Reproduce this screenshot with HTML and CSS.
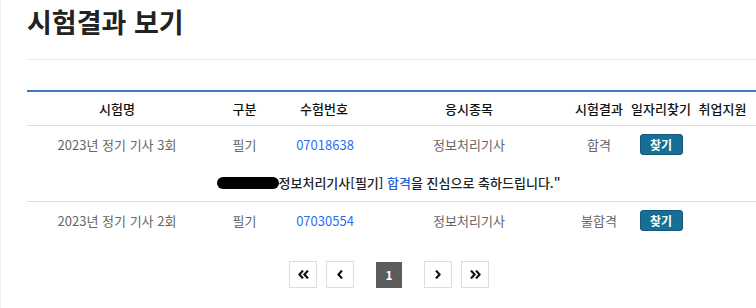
FILE: index.html
```html
<!DOCTYPE html>
<html lang="ko">
<head>
<meta charset="utf-8">
<title>시험결과 보기</title>
<link rel="stylesheet" href="styles.css">
</head>
<body>
<div class="page">
  <h1 class="title">시험결과 보기</h1>
  <div class="divider"></div>
  <table class="result">
    <colgroup>
      <col class="c-name"><col class="c-type"><col class="c-num"><col class="c-subj"><col class="c-res"><col class="c-job"><col class="c-sup">
    </colgroup>
    <thead>
      <tr>
        <th>시험명</th><th>구분</th><th>수험번호</th><th>응시종목</th><th>시험결과</th><th>일자리찾기</th><th class="last">취업지원</th>
      </tr>
    </thead>
    <tbody>
      <tr>
        <td>2023년 정기 기사 3회</td>
        <td>필기</td>
        <td><a class="num" href="#">07018638</a></td>
        <td>정보처리기사</td>
        <td>합격</td>
        <td><button class="find">찾기</button></td>
        <td class="last"></td>
      </tr>
      <tr class="msg-row">
        <td colspan="7"><span class="msg"><span class="redact"></span>정보처리기사[필기] <span class="pass">합격</span>을 진심으로 축하드립니다."</span></td>
      </tr>
      <tr>
        <td>2023년 정기 기사 2회</td>
        <td>필기</td>
        <td><a class="num" href="#">07030554</a></td>
        <td>정보처리기사</td>
        <td>불합격</td>
        <td><button class="find">찾기</button></td>
        <td class="last"></td>
      </tr>
    </tbody>
  </table>
  <nav class="pager">
    <a class="pg" href="#"><svg width="11" height="9" viewBox="0 0 11 9"><polyline points="5,0.6 1.4,4.5 5,8.4" /><polyline points="10,0.6 6.4,4.5 10,8.4" /></svg></a>
    <a class="pg" href="#"><svg width="6" height="9" viewBox="0 0 6 9"><polyline points="5,0.6 1.4,4.5 5,8.4" /></svg></a>
    <span class="pg active">1</span>
    <a class="pg" href="#"><svg width="6" height="9" viewBox="0 0 6 9"><polyline points="1,0.6 4.6,4.5 1,8.4" /></svg></a>
    <a class="pg" href="#"><svg width="11" height="9" viewBox="0 0 11 9"><polyline points="1,0.6 4.6,4.5 1,8.4" /><polyline points="6,0.6 9.6,4.5 6,8.4" /></svg></a>
  </nav>
</div>
</body>
</html>
```

FILE: styles.css
```css
html, body {
  margin: 0;
  padding: 0;
  background: #fff;
  overflow: hidden;
}
body {
  font-family: "Noto Sans CJK KR", "Noto Sans", sans-serif;
  color: #555;
  font-size: 13px;
}
.page {
  border-left: 1px solid #f0f0f0;
  padding-left: 26px;
  min-height: 308px;
  box-sizing: border-box;
}
.title {
  margin: 0;
  padding-top: 4px;
  font-size: 27px;
  line-height: 36px;
  font-weight: 700;
  color: #222;
}
.divider {
  margin-top: 19px;
  height: 1px;
  background: #eeeeee;
}
.result {
  margin-top: 30px;
  width: 729px;
  table-layout: fixed;
  border-collapse: separate;
  border-spacing: 0;
  border-top: 2px solid #3a7bbd;
}
.c-name { width: 180px; }
.c-type { width: 75px; }
.c-num { width: 84px; }
.c-subj { width: 206px; }
.c-res { width: 54px; }
.c-job { width: 70px; }
.c-sup { width: 60px; }
.result th {
  height: 33px;
  padding: 0;
  font-size: 13px;
  font-weight: 500;
  color: #111;
  text-align: center;
  vertical-align: middle;
  white-space: nowrap;
  border-bottom: 1px solid #dddddd;
}
.result td {
  height: 37px;
  padding: 0;
  text-align: center;
  vertical-align: middle;
  white-space: nowrap;
  color: #666;
}
.result .last {
  padding-right: 7px;
}
.result .msg-row td {
  height: 38px;
  border-bottom: 1px solid #dddddd;
  padding-right: 6px;
}
.num {
  color: #2f6df2;
  text-decoration: none;
  margin-left: 2px;
}
.msg {
  color: #222;
  font-weight: 500;
}
.redact {
  display: inline-block;
  width: 62px;
  height: 12px;
  border-radius: 6px;
  background: #000;
  vertical-align: -1px;
}
.pass {
  color: #1f63d8;
}
.find {
  width: 43px;
  height: 21px;
  padding: 0;
  border: 1px solid #11587a;
  border-radius: 3px;
  background: #186f96;
  color: #fff;
  font-family: inherit;
  font-size: 12px;
  font-weight: 700;
  line-height: 19px;
  vertical-align: middle;
}
.pager {
  margin-top: 22px;
  width: 724px;
  display: flex;
  justify-content: center;
  align-items: center;
  gap: 9px;
}
.pg {
  width: 28px;
  height: 27px;
  box-sizing: border-box;
  border: 1px solid #dddddd;
  display: flex;
  align-items: center;
  justify-content: center;
}
.pg svg polyline {
  fill: none;
  stroke: #111;
  stroke-width: 2.2;
}
.pg.active {
  width: 26px;
  height: 26px;
  margin: 0 13px;
  border: none;
  background: #5c5c5c;
  color: #fff;
  font-size: 12px;
  font-weight: 700;
}
```
